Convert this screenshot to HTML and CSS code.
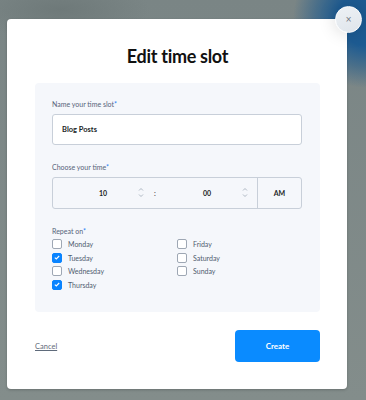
FILE: index.html
```html
<!DOCTYPE html>
<html>
<head>
<meta charset="utf-8">
<link rel="stylesheet" href="styles.css">
</head>
<body>
<div class="backdrop">
  <div class="modal">
    <button class="close" aria-label="Close">×</button>
    <h1 class="title">Edit time slot</h1>
    <div class="panel">
      <div class="label">Name your time slot<span class="req">*</span></div>
      <div class="input">Blog Posts</div>
      <div class="label label-gap">Choose your time<span class="req">*</span></div>
      <div class="timebox">
        <div class="seg">
          <span class="val">10</span>
          <svg class="spin" width="6" height="11" viewBox="0 0 6 11"><path d="M1 3.5 L3 1.5 L5 3.5 M1 7.5 L3 9.5 L5 7.5" fill="none" stroke="#a7b0bc" stroke-width="0.9"/></svg>
        </div>
        <div class="colon">:</div>
        <div class="seg">
          <span class="val">00</span>
          <svg class="spin" width="6" height="11" viewBox="0 0 6 11"><path d="M1 3.5 L3 1.5 L5 3.5 M1 7.5 L3 9.5 L5 7.5" fill="none" stroke="#a7b0bc" stroke-width="0.9"/></svg>
        </div>
        <div class="ampm">AM</div>
      </div>
      <div class="label label-gap">Repeat on<span class="req">*</span></div>
      <div class="days">
        <div class="day"><span class="cb"></span>Monday</div>
        <div class="day"><span class="cb"></span>Friday</div>
        <div class="day"><span class="cb on"><svg width="6" height="5" viewBox="0 0 6 5"><path d="M0.8 2.6 L2.3 4 L5.2 1" fill="none" stroke="#fff" stroke-width="1.1"/></svg></span>Tuesday</div>
        <div class="day"><span class="cb"></span>Saturday</div>
        <div class="day"><span class="cb"></span>Wednesday</div>
        <div class="day"><span class="cb"></span>Sunday</div>
        <div class="day"><span class="cb on"><svg width="6" height="5" viewBox="0 0 6 5"><path d="M0.8 2.6 L2.3 4 L5.2 1" fill="none" stroke="#fff" stroke-width="1.1"/></svg></span>Thursday</div>
      </div>
    </div>
    <div class="footer">
      <a class="cancel" href="#">Cancel</a>
      <button class="create">Create</button>
    </div>
  </div>
</div>
</body>
</html>
```
FILE: styles.css
```css
* { box-sizing: border-box; }
html, body { margin: 0; padding: 0; }
body {
  width: 366px;
  height: 400px;
  overflow: hidden;
  font-family: "Lato", "Inter", sans-serif;
}
.backdrop {
  width: 366px;
  height: 400px;
  padding: 19px 0 0 7px;
  background:
    radial-gradient(ellipse 75px 70px at 368px 18px, #1b5a92 0%, #1d5b92 40%, rgba(40,95,140,0.6) 70%, rgba(26,90,148,0) 100%),
    radial-gradient(ellipse 90px 30px at 60px 10px, #6e7979 0%, rgba(110,121,121,0) 100%),
    linear-gradient(180deg, #7a8585 0%, #838d8b 100%);
}
.modal {
  position: relative;
  width: 340px;
  height: 370px;
  background: #fff;
  border-radius: 4px;
  padding: 0 27px 0 28px;
  box-shadow: 0 1px 3px rgba(0,0,0,0.2);
}
.close {
  position: absolute;
  left: 328px;
  top: -13px;
  width: 27px;
  height: 27px;
  border-radius: 50%;
  border: 1px solid #fbfcfd;
  background: linear-gradient(160deg, #edf1f5 0%, #dfe5eb 100%);
  box-shadow: 0 0 18px rgba(0,0,0,0.16);
  color: #6d747c;
  font-size: 8px;
  line-height: 25px;
  padding: 0;
  text-align: center;
  font-family: "DejaVu Sans", sans-serif;
}
.title {
  margin: 0;
  padding-top: 25px;
  height: 64px;
  text-align: center;
  font-size: 18px;
  line-height: 24px;
  font-weight: 700;
  color: #111;
  letter-spacing: -0.3px;
}
.panel {
  height: 229px;
  background: #f5f7fb;
  border-radius: 4px;
  padding: 16px 18px 0 17px;
}
.label {
  font-size: 7px;
  line-height: 10px;
  color: #56637a;
}
.label-gap { margin-top: 17px; }
.req { color: #1a7ff5; }
.input {
  margin-top: 5px;
  height: 31px;
  border: 1px solid #c8cfd9;
  border-radius: 3px;
  background: #fff;
  padding-left: 9px;
  font-size: 7.5px;
  line-height: 29px;
  color: #1b1f27;
  font-weight: 700;
}
.timebox {
  margin-top: 5px;
  height: 32px;
  border: 1px solid #c8cfd9;
  border-radius: 3px;
  display: flex;
  align-items: stretch;
  font-size: 7px;
  color: #1b1f27;
  font-weight: 700;
}
.seg {
  width: 100px;
  position: relative;
  display: flex;
  align-items: center;
  justify-content: center;
}
.spin {
  position: absolute;
  right: 9px;
  top: 9px;
}
.colon {
  width: 4px;
  display: flex;
  align-items: center;
  justify-content: center;
  color: #555;
}
.ampm {
  flex: 1;
  border-left: 1px solid #c8cfd9;
  display: flex;
  align-items: center;
  justify-content: center;
  font-weight: 700;
  font-size: 7px;
}
.days {
  margin-top: 1px;
  display: grid;
  grid-template-columns: 125px 1fr;
  grid-auto-rows: 13.7px;
  align-items: center;
}
.day {
  display: flex;
  align-items: center;
  font-size: 7px;
  color: #4f5b6e;
  height: 10px;
}
.cb {
  width: 10px;
  height: 10px;
  border: 1px solid #9ea7b4;
  border-radius: 2px;
  background: #fff;
  margin-right: 6px;
  display: flex;
  align-items: center;
  justify-content: center;
}
.cb.on {
  background: #0a84ff;
  border-color: #0a84ff;
}
.footer {
  display: flex;
  justify-content: space-between;
  align-items: center;
  margin-top: 18px;
}
.cancel {
  font-size: 7.5px;
  color: #5f6b7b;
  text-decoration: underline;
}
.create {
  width: 85px;
  height: 32px;
  border: none;
  border-radius: 4px;
  background: #0a8bff;
  color: #fff;
  font-family: "Lato", sans-serif;
  font-weight: 700;
  font-size: 8px;
  padding: 0;
}
```
